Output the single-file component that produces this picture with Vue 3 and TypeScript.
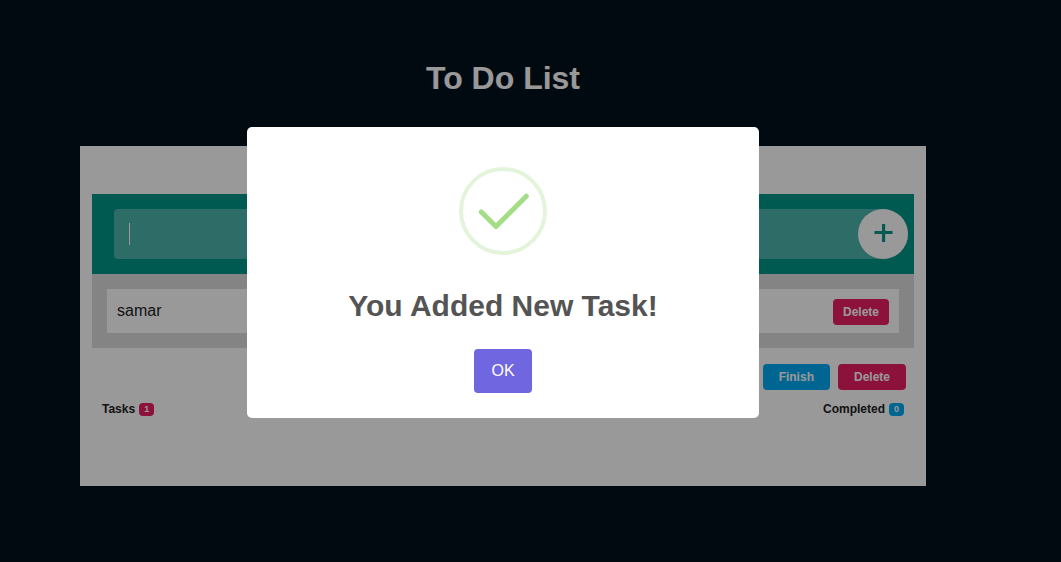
<script setup lang="ts">
import { computed, ref } from 'vue'

interface Task {
  id: number
  name: string
  done: boolean
}

const tasks = ref<Task[]>([{ id: 1, name: 'samar', done: false }])
const draft = ref('')
const dialogOpen = ref(true)
const completed = computed(() => tasks.value.filter((t) => t.done).length)

function addTask() {
  const name = draft.value.trim()
  if (!name) return
  tasks.value.push({ id: Date.now(), name, done: false })
  draft.value = ''
  dialogOpen.value = true
}

function removeTask(id: number) {
  tasks.value = tasks.value.filter((t) => t.id !== id)
}

function finishAll() {
  tasks.value.forEach((t) => (t.done = true))
}
</script>

<template>
  <main class="page">
    <h1 class="heading">To Do List</h1>
    <section class="card">
      <form class="add" @submit.prevent="addTask">
        <div class="field">
          <input v-model="draft" class="entry" type="text" aria-label="New task" />
          <span v-if="!draft" class="caret"></span>
          <button class="plus" type="submit" aria-label="Add task">
            <svg width="20" height="20" viewBox="0 0 20 20" aria-hidden="true">
              <path d="M1.5 8.5h18M10.6 0v18" fill="none" stroke="#009688" stroke-width="3.1" />
            </svg>
          </button>
        </div>
      </form>
      <ul class="tasks">
        <li v-for="task in tasks" :key="task.id" class="task">
          <span>{{ task.name }}</span>
          <button class="btn small red" type="button" @click="removeTask(task.id)">Delete</button>
        </li>
      </ul>
      <div class="actions">
        <button class="btn blue" type="button" @click="finishAll">Finish</button>
        <button class="btn red" type="button" @click="tasks = []">Delete</button>
      </div>
      <div class="stats">
        <div class="stat">Tasks <span class="badge red">{{ tasks.length }}</span></div>
        <div class="stat">Completed <span class="badge blue">{{ completed }}</span></div>
      </div>
    </section>
  </main>

  <div v-if="dialogOpen" class="overlay">
    <div class="dialog" role="dialog" aria-modal="true" aria-labelledby="dialog-title">
      <svg class="icon" width="88" height="88" viewBox="0 0 88 88" fill="none" aria-hidden="true">
        <circle cx="44" cy="44" r="42" stroke="#a5dc86" stroke-opacity="0.3" stroke-width="4" />
        <path
          d="M22.3 45L37 59.5L67.3 29.2"
          stroke="#a5dc86"
          stroke-width="5"
          stroke-linecap="round"
          stroke-linejoin="round"
        />
      </svg>
      <h2 id="dialog-title" class="title">You Added New Task!</h2>
      <button class="ok" type="button" @click="dialogOpen = false">OK</button>
    </div>
  </div>
</template>

<style>
body {
  background: #03111d;
}
</style>

<style scoped>
* {
  box-sizing: border-box;
}

.page,
.overlay,
button,
input {
  font-family: "Liberation Sans", Arial, sans-serif;
}

.page {
  min-height: 100vh;
  padding: 60px 135px 60px 80px;
}

.heading {
  margin: 0 0 50px;
  color: #fff;
  font-size: 32px;
  line-height: 36px;
  text-align: center;
}

.card {
  padding: 48px 12px 69px;
  background: #fff;
}

.add {
  padding: 15px 6px 15px 22px;
  background: #009688;
}

.field {
  position: relative;
  display: flex;
  height: 50px;
  border-radius: 4px 25px 25px 4px;
  background: rgba(255, 255, 255, 0.3);
}

.entry {
  flex: 1;
  min-width: 0;
  padding: 0 15px;
  border: 0;
  outline: 0;
  background: transparent;
  color: #fff;
  font-size: 20px;
}

.caret {
  position: absolute;
  top: 14px;
  left: 15px;
  width: 1px;
  height: 22px;
  background: #fff;
  pointer-events: none;
}

.entry:focus + .caret {
  display: none;
}

.plus {
  display: flex;
  align-items: center;
  justify-content: center;
  width: 50px;
  height: 50px;
  padding: 0;
  border: 0;
  border-radius: 50%;
  background: #fff;
  cursor: pointer;
}

.tasks {
  display: flex;
  flex-direction: column;
  gap: 15px;
  margin: 0;
  padding: 15px;
  background: #ddd;
  list-style: none;
}

.task {
  display: flex;
  align-items: flex-start;
  justify-content: space-between;
  height: 44px;
  padding: 10px;
  background: #fff;
  color: #222;
  font-size: 16px;
  line-height: 24px;
}

.btn {
  height: 26px;
  padding: 0 16px;
  border: 0;
  border-radius: 4px;
  color: #fff;
  font-size: 12px;
  font-weight: bold;
  cursor: pointer;
}

.small {
  padding: 0 10px;
}

.red {
  background: #e91e63;
}

.blue {
  background: #03a9f4;
}

.actions {
  display: flex;
  justify-content: flex-end;
  gap: 8px;
  padding: 16px 8px 12px;
}

.stats {
  display: flex;
  justify-content: space-between;
  padding: 0 10px;
}

.stat {
  display: flex;
  align-items: center;
  gap: 4px;
  color: #222;
  font-size: 12px;
  font-weight: bold;
  line-height: 15px;
}

.badge {
  padding: 0 5px;
  border-radius: 4px;
  color: #fff;
  font-size: 9px;
  line-height: 13px;
}

.overlay {
  position: fixed;
  inset: 0;
  display: flex;
  align-items: center;
  justify-content: center;
  padding: 0 55px 17px 0;
  background: rgba(0, 0, 0, 0.4);
}

.dialog {
  display: flex;
  flex-direction: column;
  align-items: center;
  width: 512px;
  max-width: 100%;
  padding: 40px 20px 25px;
  border-radius: 5px;
  background: #fff;
}

.title {
  margin: 33px 0 25px;
  color: #545454;
  font-size: 30px;
  line-height: 36px;
}

.ok {
  height: 44px;
  padding: 0 17px;
  border: 0;
  border-radius: 4px;
  background: #7066e0;
  color: #fff;
  font-size: 16px;
  cursor: pointer;
}
</style>
